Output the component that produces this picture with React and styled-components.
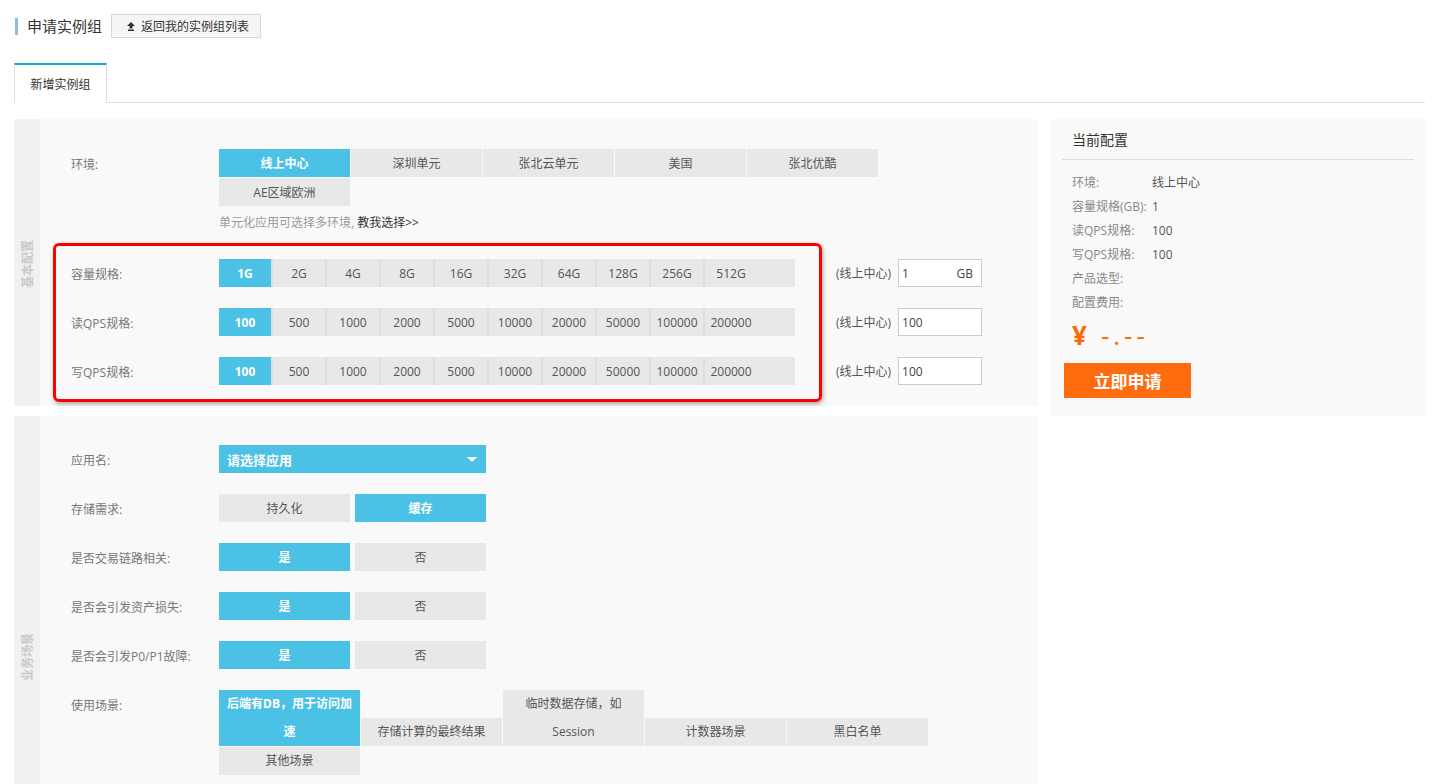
import React from 'react';
import styled, { createGlobalStyle } from 'styled-components';

const GlobalStyle = createGlobalStyle`
  body {
    margin: 0;
    background: #fff;
    font-family: "Open Sans", "Noto Sans CJK SC", sans-serif;
    font-size: 12px;
    color: #555;
  }
  * { box-sizing: border-box; }
`

const envs = ['线上中心', '深圳单元', '张北云单元', '美国', '张北优酷', 'AE区域欧洲'];
const sizes = ['1G', '2G', '4G', '8G', '16G', '32G', '64G', '128G', '256G', '512G'];
const qps = ['100', '500', '1000', '2000', '5000', '10000', '20000', '50000', '100000', '200000'];
const scenes = ['后端有DB，用于访问加速', '存储计算的最终结果', '临时数据存储，如 Session', '计数器场景', '黑白名单', '其他场景'];

const specs = [
    { label: '容量规格:', items: sizes, value: '1', unit: 'GB' },
    { label: '读QPS规格:', items: qps, value: '100' },
    { label: '写QPS规格:', items: qps, value: '100' },
];

const choices = [
    { label: '存储需求:', items: ['持久化', '缓存'], active: 1 },
    { label: '是否交易链路相关:', items: ['是', '否'], active: 0 },
    { label: '是否会引发资产损失:', items: ['是', '否'], active: 0 },
    { label: '是否会引发P0/P1故障:', items: ['是', '否'], active: 0 },
];

const summary = [
    ['环境:', '线上中心'],
    ['容量规格(GB):', '1'],
    ['读QPS规格:', '100'],
    ['写QPS规格:', '100'],
    ['产品选型:', ''],
    ['配置费用:', ''],
];

export default function App() {
    return (
        <Page>
            <GlobalStyle />
            <Header>
                <Title>申请实例组</Title>
                <BackButton>
                    <svg width="8" height="9" viewBox="0 0 8 9">
                        <path d="M4 0 L8 4 L5.5 4 L5.5 6.5 L2.5 6.5 L2.5 4 L0 4 Z" fill="#333" />
                        <rect x="1" y="7.5" width="6" height="1.5" fill="#333" />
                    </svg>
                    返回我的实例组列表
                </BackButton>
            </Header>
            <TabBar>
                <Tab>新增实例组</Tab>
            </TabBar>
            <Main>
                <Forms>
                    <Section>
                        <Side><SideLabel>基本配置</SideLabel></Side>
                        <Content>
                            <Row>
                                <Label>环境:</Label>
                                <div>
                                    <EnvGrid>
                                        {envs.map((e, i) => (
                                            <EnvButton key={e} $active={i === 0}>{e}</EnvButton>
                                        ))}
                                    </EnvGrid>
                                    <Hint>单元化应用可选择多环境, <strong>教我选择&gt;&gt;</strong></Hint>
                                </div>
                            </Row>
                            <SpecGroup>
                                {specs.map((s, r) => (
                                    <SpecRow key={s.label} $first={r === 0}>
                                        <Label>{s.label}</Label>
                                        <SpecBar>
                                            {s.items.map((it, i) => (
                                                <SpecItem key={it} $active={i === 0} $first={i === 0}>{it}</SpecItem>
                                            ))}
                                        </SpecBar>
                                        <Extra>(线上中心)</Extra>
                                        <ValueBox>
                                            <span>{s.value}</span>
                                            {s.unit && <span>{s.unit}</span>}
                                        </ValueBox>
                                    </SpecRow>
                                ))}
                                <Highlight />
                            </SpecGroup>
                        </Content>
                    </Section>
                    <Section>
                        <Side><SideLabel>业务场景</SideLabel></Side>
                        <Content $bottom={120} $top={29}>
                            <Row>
                                <Label>应用名:</Label>
                                <Select>
                                    请选择应用
                                    <svg width="10" height="5" viewBox="0 0 10 5">
                                        <path d="M0 0 H10 L5 5 Z" fill="#fff" />
                                    </svg>
                                </Select>
                            </Row>
                            {choices.map(c => (
                                <Row key={c.label} $gap={21}>
                                    <Label>{c.label}</Label>
                                    <Pair>
                                        {c.items.map((it, i) => (
                                            <PairButton key={it} $active={i === c.active}>{it}</PairButton>
                                        ))}
                                    </Pair>
                                </Row>
                            ))}
                            <Row $gap={21}>
                                <Label>使用场景:</Label>
                                <SceneWrap>
                                    {scenes.map((s, i) => (
                                        <SceneButton key={s} $active={i === 0}>{s}</SceneButton>
                                    ))}
                                </SceneWrap>
                            </Row>
                        </Content>
                    </Section>
                </Forms>
                <Panel>
                    <PanelHead>当前配置</PanelHead>
                    <Summary>
                        {summary.map(([k, v]) => (
                            <SummaryRow key={k}>
                                <Key>{k}</Key>
                                <span>{v}</span>
                            </SummaryRow>
                        ))}
                    </Summary>
                    <Price><Yen>¥</Yen>-.--</Price>
                    <ApplyButton>立即申请</ApplyButton>
                </Panel>
            </Main>
        </Page>
    )
}

const Page = styled.div`
    padding: 14px 14px 0 14px;
`

const Header = styled.div`
    display: flex;
    align-items: center;
    height: 24px;
`

const Title = styled.div`
    border-left: 3px solid #8dbbe3;
    padding-left: 9px;
    margin-left: 1px;
    font-size: 15px;
    line-height: 17px;
    color: #333;
`

const BackButton = styled.button`
    margin-left: 9px;
    height: 24px;
    width: 150px;
    display: flex;
    align-items: center;
    gap: 6px;
    padding: 0 0 0 15px;
    background: #f5f5f5;
    border: 1px solid #d8d8d8;
    font-family: inherit;
    font-size: 12px;
    color: #333;
`

const TabBar = styled.div`
    margin-top: 25px;
    display: flex;
    height: 40px;
    border-bottom: 1px solid #ddd;
`

const Tab = styled.div`
    width: 93px;
    height: 40px;
    background: #fff;
    border-top: 2px solid #1ba6d3;
    border-left: 1px solid #ddd;
    border-right: 1px solid #ddd;
    display: flex;
    align-items: center;
    justify-content: center;
    color: #333;
`

const Main = styled.div`
    margin-top: 16px;
    display: flex;
    gap: 13px;
    align-items: flex-start;
`

const Forms = styled.div`
    width: 1024px;
    display: flex;
    flex-direction: column;
    gap: 10px;
`

const Section = styled.div`
    display: flex;
    background: #f9f9f9;
`

const Side = styled.div`
    width: 26px;
    flex-shrink: 0;
    background: #f1f1f1;
    display: flex;
    align-items: center;
    justify-content: center;
`

const SideLabel = styled.div`
    writing-mode: vertical-rl;
    text-orientation: sideways;
    transform: rotate(180deg);
    font-size: 12px;
    font-weight: bold;
    color: #c9c9c9;
    margin-top: 4px;
`

const Content = styled.div`
    flex: 1;
    padding: ${p => p.$top || 30}px 0 ${p => p.$bottom || 21}px 31px;
`

const Row = styled.div`
    display: flex;
    align-items: flex-start;
    margin-top: ${p => p.$gap || 0}px;
`

const Label = styled.div`
    width: 148px;
    height: 28px;
    flex-shrink: 0;
    line-height: 28px;
    padding-top: 2px;
    color: #777;
`

const EnvGrid = styled.div`
    display: flex;
    flex-wrap: wrap;
    gap: 1px;
    width: 659px;
`

const EnvButton = styled.div`
    width: 131px;
    height: 28px;
    line-height: 28px;
    padding-top: 1px;
    text-align: center;
    background: ${p => p.$active ? '#4cc1e6' : '#e8e8e8'};
    color: ${p => p.$active ? '#fff' : '#555'};
    font-weight: ${p => p.$active ? 'bold' : 'normal'};
`

const Hint = styled.div`
    margin-top: 10px;
    line-height: 14px;
    color: #999;
    strong {
        color: #333;
        font-weight: normal;
    }
`

const SpecGroup = styled.div`
    position: relative;
    margin-top: 29px;
`

const SpecRow = styled.div`
    display: flex;
    align-items: center;
    margin-top: ${p => p.$first ? 0 : 21}px;
`

const SpecBar = styled.div`
    display: flex;
    width: 576px;
    height: 28px;
    background: #e8e8e8;
`

const SpecItem = styled.div`
    width: ${p => p.$first ? 52 : 54}px;
    height: 28px;
    line-height: 28px;
    padding-top: 1px;
    text-align: center;
    border-left: ${p => p.$first ? 'none' : '2px solid #dedede'};
    background: ${p => p.$active ? '#4cc1e6' : '#e8e8e8'};
    color: ${p => p.$active ? '#fff' : '#555'};
    font-weight: ${p => p.$active ? 'bold' : 'normal'};
`

const Extra = styled.div`
    margin-left: 41px;
    color: #555;
`

const ValueBox = styled.div`
    margin-left: 7px;
    width: 84px;
    height: 28px;
    display: flex;
    align-items: center;
    justify-content: space-between;
    padding: 0 8px 0 3px;
    background: #fff;
    border: 1px solid #ccc;
    color: #444;
`

const Highlight = styled.div`
    position: absolute;
    top: -16px;
    left: -18px;
    width: 769px;
    height: 159px;
    border: 3px solid #f00;
    border-radius: 6px;
    box-shadow: 1px 2px 4px rgba(0, 0, 0, 0.35);
    pointer-events: none;
`

const Select = styled.div`
    width: 267px;
    height: 28px;
    display: flex;
    align-items: center;
    justify-content: space-between;
    padding: 0 9px 0 8px;
    background: #4cc1e6;
    color: #fff;
    font-size: 13px;
    font-weight: bold;
`

const Pair = styled.div`
    display: flex;
    gap: 5px;
`

const PairButton = styled(EnvButton)``

const SceneWrap = styled.div`
    display: flex;
    flex-wrap: wrap;
    align-items: flex-end;
    gap: 1px;
    width: 760px;
`

const SceneButton = styled.div`
    width: 141px;
    padding: 0 6px;
    line-height: 28px;
    text-align: center;
    background: ${p => p.$active ? '#4cc1e6' : '#e8e8e8'};
    color: ${p => p.$active ? '#fff' : '#555'};
    font-weight: ${p => p.$active ? 'bold' : 'normal'};
`

const Panel = styled.div`
    width: 374px;
    background: #f9f9f9;
    padding: 0 11px 18px;
`

const PanelHead = styled.div`
    padding: 12px 10px 10px;
    line-height: 18px;
    font-size: 14px;
    color: #333;
    border-bottom: 1px solid #ddd;
`

const Summary = styled.div`
    margin-top: 11px;
    padding-left: 10px;
`

const SummaryRow = styled.div`
    display: flex;
    line-height: 24px;
    color: #555;
`

const Key = styled.span`
    width: 80px;
    color: #888;
`

const Price = styled.div`
    margin-top: 3px;
    padding-left: 10px;
    line-height: 34px;
    font-size: 26px;
    letter-spacing: 4px;
    color: #ff6a00;
`

const Yen = styled.span`
    font-weight: bold;
    margin-right: 10px;
`

const ApplyButton = styled.button`
    margin: 11px 0 0 2px;
    width: 127px;
    height: 35px;
    border: none;
    background: #ff6c10;
    color: #fff;
    font-family: inherit;
    font-size: 17px;
    font-weight: bold;
`
